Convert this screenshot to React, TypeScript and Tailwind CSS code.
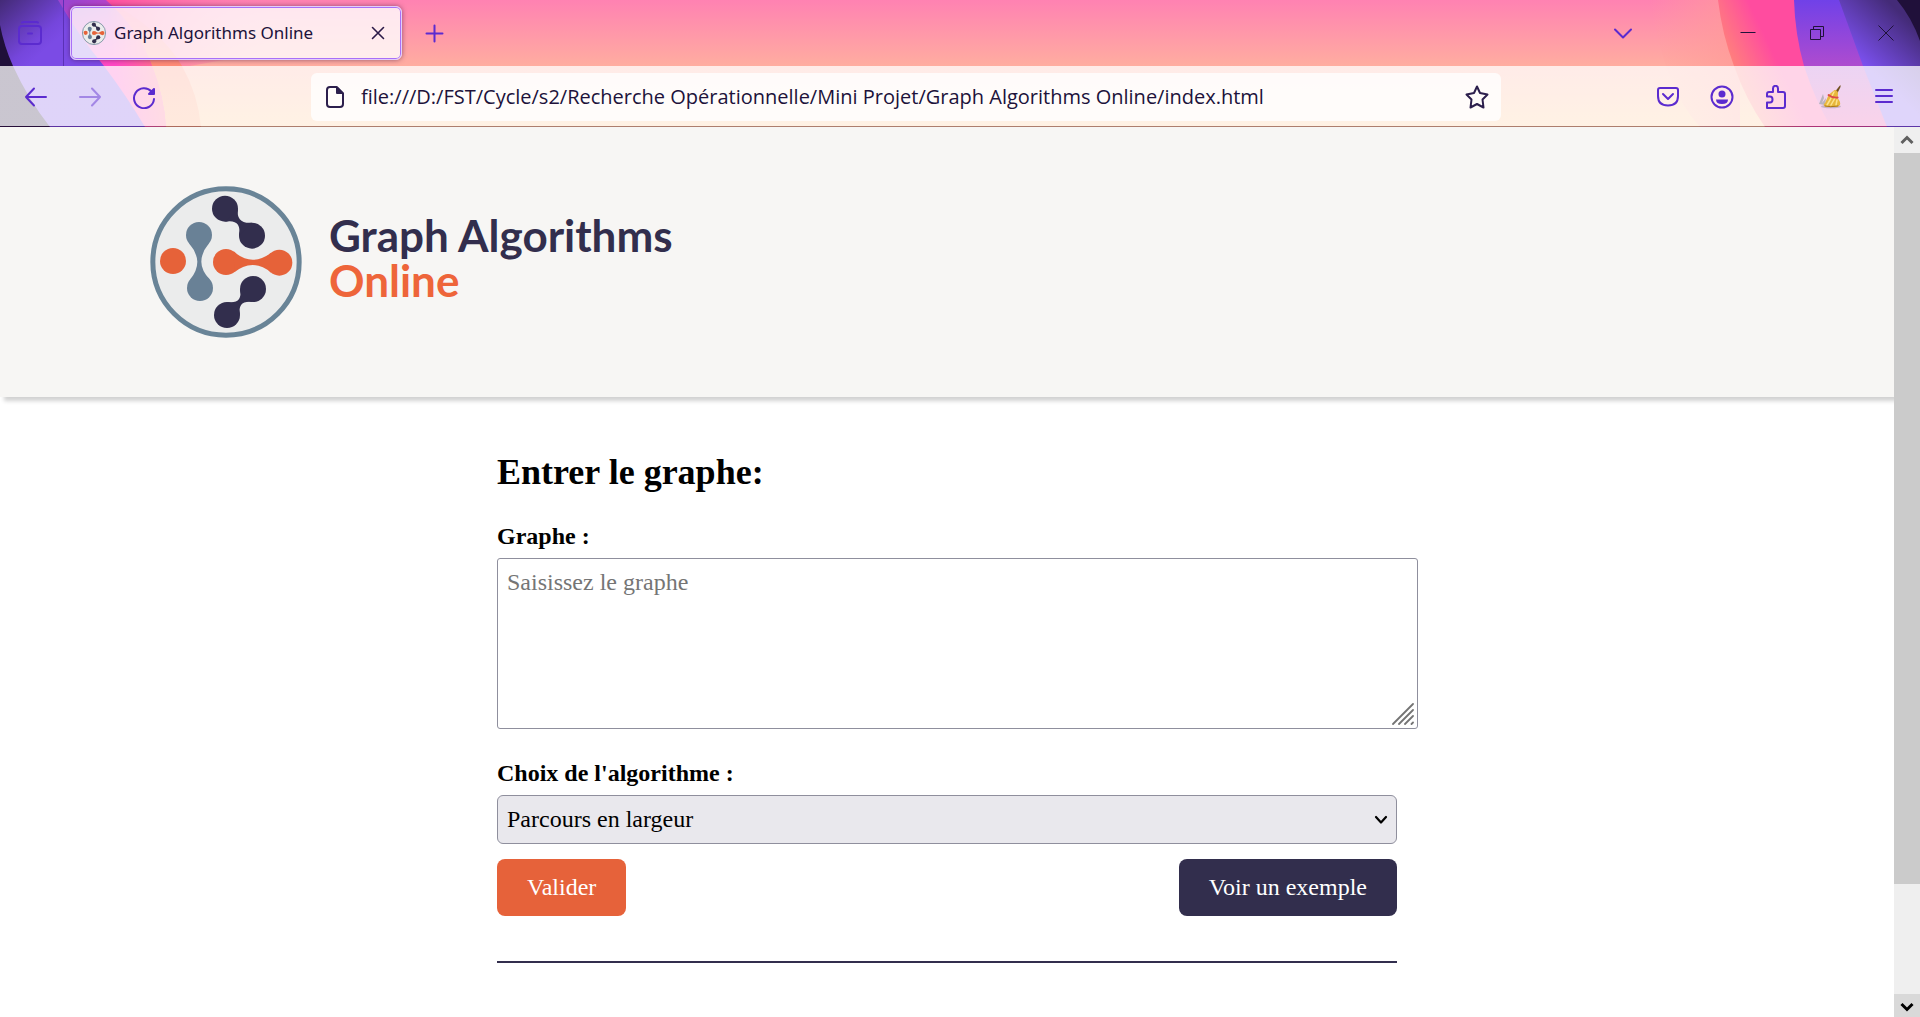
import type { ReactNode } from "react";

function LogoMark({ className }: { className: string }) {
  return (
    <svg viewBox="14 18 456 456" className={className} aria-hidden="true">
      <circle cx="242" cy="246" r="219.5" fill="#ebecec" stroke="#698497" strokeWidth="15" />
      <g fill="#698196">
        <circle cx="161" cy="165" r="39" />
        <circle cx="164" cy="324" r="39" />
        <path d="M131 190Q155 218 156 245Q156 272 134 299L194 299Q168 272 168 245Q168 218 191 190Z" />
      </g>
      <g fill="#e66239">
        <circle cx="83" cy="243" r="39" />
        <circle cx="242" cy="246" r="39" />
        <circle cx="402" cy="248" r="39" />
        <path d="M265 214Q292 239 322 239Q352 239 377 218L377 278Q352 256 322 255Q292 256 267 277Z" />
      </g>
      <g fill="#322e4d">
        <circle cx="239" cy="86" r="39" />
        <circle cx="320" cy="167" r="39" />
        <path d="M278 86Q271 132 320 128L281 167Q290 116 239 125Z" />
        <circle cx="323" cy="327" r="39" />
        <circle cx="245" cy="405" r="39" />
        <path d="M284 327Q293 373 245 366L284 405Q275 360 323 366Z" />
      </g>
    </svg>
  );
}

function ThemeArt() {
  return (
    <>
      <svg className="absolute left-0 top-0 h-[127px] w-[280px]" viewBox="0 0 280 127" aria-hidden="true">
        <defs>
          <linearGradient id="l-glow" gradientUnits="userSpaceOnUse" x1="106" y1="0" x2="270" y2="20">
            <stop offset="0" stopColor="#ff4c9f" />
            <stop offset="1" stopColor="#ff82b2" stopOpacity="0" />
          </linearGradient>
          <linearGradient id="l-orange" x1="0" y1="0" x2="0" y2="1">
            <stop offset="0" stopColor="#ff4c9f" />
            <stop offset="0.5" stopColor="#ff8a76" />
            <stop offset="1" stopColor="#ffa873" />
          </linearGradient>
          <linearGradient id="l-pink" gradientUnits="userSpaceOnUse" x1="75" y1="0" x2="100" y2="62">
            <stop offset="0" stopColor="#9d44cf" />
            <stop offset="0.5" stopColor="#d945cb" />
            <stop offset="1" stopColor="#ff48c4" />
          </linearGradient>
          <linearGradient id="l-coral" gradientUnits="userSpaceOnUse" x1="115" y1="66" x2="155" y2="60">
            <stop offset="0" stopColor="#ff6a90" stopOpacity="0" />
            <stop offset="1" stopColor="#ff6a90" />
          </linearGradient>
          <linearGradient id="l-purple" gradientUnits="userSpaceOnUse" x1="0" y1="0" x2="45" y2="50">
            <stop offset="0" stopColor="#432a76" />
            <stop offset="0.8" stopColor="#7546dc" />
            <stop offset="1" stopColor="#7b4be5" />
          </linearGradient>
        </defs>
        <path d="M100 0H280V50L190 66H120Z" fill="url(#l-glow)" />
        <path d="M0 0H106Q160 28 182 66Q198 94 201 127H0Z" fill="url(#l-orange)" />
        <path d="M0 0H106Q138 28 152 66Q164 96 166 127H0Z" fill="url(#l-pink)" />
        <path d="M0 0H106Q138 28 152 66Q164 96 166 127H0Z" fill="url(#l-coral)" />
        <path d="M0 0H58Q78 35 104 66Q128 98 145 127H0Z" fill="url(#l-purple)" />
        <path d="M0 25Q4 46 13 66Q28 99 50 127H0Z" fill="#20103a" />
      </svg>
      <svg className="absolute right-0 top-0 h-[127px] w-[270px]" viewBox="0 0 270 127" aria-hidden="true">
        <defs>
          <linearGradient id="r-fade" x1="0" y1="0" x2="1" y2="0">
            <stop offset="0" stopColor="#ff9d9a" stopOpacity="0" />
            <stop offset="1" stopColor="#ff9a98" stopOpacity="0.8" />
          </linearGradient>
          <linearGradient id="r-pink" gradientUnits="userSpaceOnUse" x1="78" y1="66" x2="120" y2="46">
            <stop offset="0" stopColor="#ff8678" />
            <stop offset="1" stopColor="#ff4c9f" />
          </linearGradient>
          <linearGradient id="r-purple" x1="0" y1="0" x2="0" y2="1">
            <stop offset="0" stopColor="#7041e8" />
            <stop offset="0.5" stopColor="#ac4bd0" />
            <stop offset="1" stopColor="#e747a6" />
          </linearGradient>
          <linearGradient id="r-violet" gradientUnits="userSpaceOnUse" x1="215" y1="66" x2="258" y2="20">
            <stop offset="0" stopColor="#7b50ee" />
            <stop offset="1" stopColor="#442b78" />
          </linearGradient>
        </defs>
        <path d="M0 0H90V127H50Q15 90 0 0Z" fill="url(#r-fade)" />
        <path d="M68 0Q72 34 84 66Q96 100 115 127H270V0Z" fill="url(#r-pink)" />
        <path d="M144 0Q145 34 154 66Q165 100 181 127H270V0Z" fill="url(#r-purple)" />
        <path d="M189 0L213 66L237 127H270V0Z" fill="url(#r-violet)" />
        <path d="M247 0Q262 18 270 41V0Z" fill="#20103a" />
      </svg>
    </>
  );
}

type IconProps = { label: string; width?: string; children: ReactNode };

function ChromeButton({ label, width = "w-[54px]", children }: IconProps) {
  return (
    <button type="button" aria-label={label} className={`flex h-full shrink-0 items-center justify-center text-[#5b2bcf] ${width}`}>
      <svg
        viewBox="0 0 24 24"
        className="h-6 w-6"
        fill="none"
        stroke="currentColor"
        strokeWidth="2"
        strokeLinecap="round"
        strokeLinejoin="round"
        aria-hidden="true"
      >
        {children}
      </svg>
    </button>
  );
}

function TabStrip() {
  return (
    <div className="relative flex h-[66px] items-center">
      <ChromeButton label="Recent browsing" width="w-[60px]">
        <path d="M4 1.5Q4.500 1 6 1H18Q19.500 1 20 1.500" />
        <rect x="1" y="5" width="22" height="18" rx="3" />
        <path d="M10 12.500H14" />
      </ChromeButton>
      <div className="ml-[3px] h-full w-px bg-[#5a31b5]" />
      <div className="ml-1.5 flex h-[54px] w-[332px] items-center rounded-md border border-[#e3cdfb] bg-white/80 shadow-[inset_0_0_0_1px_#a970f8,0_0_5px_rgba(60,20,60,0.55)]">
        <LogoMark className="ml-[11px] h-6 w-6" />
        <span className="ml-2 flex-1 whitespace-nowrap text-[17px] leading-6 text-[#20123a]">Graph Algorithms Online</span>
        <button type="button" aria-label="Close tab" className="mr-[11px] flex h-6 w-6 items-center justify-center text-[#2c1a48]">
          <svg viewBox="0 0 14 14" className="h-3.5 w-3.5" stroke="currentColor" strokeWidth="1.600" strokeLinecap="round" aria-hidden="true">
            <path d="M1.500 1.500L12.500 12.500M12.500 1.500L1.500 12.500" />
          </svg>
        </button>
      </div>
      <div className="ml-[5px] h-full">
        <ChromeButton label="New tab">
          <path d="M12.500 4.500V20.500M4.500 12.500H20.500" />
        </ChromeButton>
      </div>
      <div className="flex-1" />
      <ChromeButton label="List all tabs">
        <path d="M4 8.500L12 16.500L20 8.500" />
      </ChromeButton>
      <div className="ml-[63px] flex h-full text-[#20123a]">
        {[
          ["Minimize", "M4.500 11.500H19.500"],
          ["Restore", "M5.500 8.500H15.500V18.500H5.500ZM8.500 8.500V5.500H18.500V15.500H15.500"],
          ["Close", "M4.500 4.500L19.500 19.500M19.500 4.500L4.500 19.500"],
        ].map(([label, d]) => (
          <button key={label} type="button" aria-label={label} className="flex h-full w-[69px] items-center justify-center">
            <svg viewBox="0 0 24 24" className="h-6 w-6" fill="none" stroke="currentColor" aria-hidden="true">
              <path d={d} />
            </svg>
          </button>
        ))}
      </div>
    </div>
  );
}

function Toolbar() {
  return (
    <div className="relative flex h-[61px] items-center border-b border-[#320f3c]/40 bg-[linear-gradient(rgba(255,255,255,0.76),rgba(255,255,255,0.76))] bg-clip-padding px-[9px] pt-px">
      <ChromeButton label="Back">
        <path d="M22 12H2M10 3.500L2 12L10 20.500" />
      </ChromeButton>
      <button type="button" aria-label="Forward" disabled className="flex h-full w-[54px] items-center justify-center text-[#5b2bcf] opacity-45">
        <svg viewBox="0 0 24 24" className="h-6 w-6" fill="none" stroke="currentColor" strokeWidth="2" strokeLinecap="round" strokeLinejoin="round" aria-hidden="true">
          <path d="M2 12H22M14 3.500L22 12L14 20.500" />
        </svg>
      </button>
      <ChromeButton label="Reload">
        <path d="M19.500 6.500A10 10 0 1 0 22 14" />
        <path d="M22 4V9H17Z" fill="currentColor" />
      </ChromeButton>
      <div className="mx-[140px] flex h-12 min-w-0 flex-1 items-center rounded-md bg-white/80 text-[#2c1f4c]">
        <svg viewBox="0 0 18 22" className="ml-[15px] h-[22px] w-[18px] shrink-0" fill="none" stroke="currentColor" strokeWidth="2" strokeLinejoin="round" aria-hidden="true">
          <path d="M4 1H10.500L17 7.500V18Q17 21 14 21H4Q1 21 1 18V4Q1 1 4 1Z" />
          <path d="M11 1.500V7H16.500Z" fill="currentColor" />
        </svg>
        <input
          aria-label="Address"
          className="ml-[17px] min-w-0 flex-1 bg-transparent font-['Open_Sans',sans-serif] text-[20px] leading-7 text-[#20123a] outline-none"
          defaultValue="file:///D:/FST/Cycle/s2/Recherche Opérationnelle/Mini Projet/Graph Algorithms Online/index.html"
        />
        <button type="button" aria-label="Bookmark this page" className="mr-3 flex h-full items-center">
          <svg viewBox="0 0 24 24" className="h-6 w-6" fill="none" stroke="currentColor" strokeWidth="2" strokeLinejoin="round" aria-hidden="true">
            <path d="M12 1.500L15 8L22.500 9.500L17.500 14.500L18.500 22.500L12 19L5.500 22.500L6.500 14.500L1.500 9.500L9 8Z" />
          </svg>
        </button>
      </div>
      <ChromeButton label="Save to Pocket">
        <path d="M4 3H20Q22 3 22 5V11Q22 20.500 12 20.500Q2 20.500 2 11V5Q2 3 4 3Z" />
        <path d="M7 9L12 14L17 9" />
      </ChromeButton>
      <ChromeButton label="Account">
        <circle cx="12" cy="12" r="10.500" />
        <circle cx="12" cy="9" r="3.500" fill="currentColor" stroke="none" />
        <path d="M6 14.500H18Q18 19 12 19Q6 19 6 14.500Z" fill="currentColor" stroke="none" />
      </ChromeButton>
      <ChromeButton label="Extensions">
        <path d="M3 23V17.500H6Q8.500 17.500 8.500 14.500Q8.500 11.500 6 11.500H3V9Q3 7 5 7H9V3.500Q9 .8 11.500 .8Q14 .8 14 3.500V7H19Q21 7 21 9V21Q21 23 19 23Z" />
      </ChromeButton>
      <ChromeButton label="Clean history">
        <g stroke="none">
          <ellipse cx="13" cy="21.500" rx="10" ry="1.800" fill="#9b91a0" opacity="0.5" />
          <path d="M1 19L5 9L6 13L4 18L8 13L7 20Z" fill="#b9b3bd" />
          <path d="M17.500 6L21.500 1L22.500 0L22.500 2L19.500 8Z" fill="#70501f" />
          <path d="M16.500 5Q20 5 20 9L19.500 13Q23 17 22 20L19 22H8Q4 20 7 18Q9 14 10.500 10Z" fill="#e8b73c" />
          <path d="M16 7L12 15L9 20M17 13L13 20M19 15L18 20" stroke="#fbe38c" strokeWidth="1.500" fill="none" />
          <path d="M10.500 10Q14 13 19.700 12.500" stroke="#dc4a4a" strokeWidth="1.800" fill="none" />
          <path d="M7 21Q12 22.500 20 21" stroke="#a97619" strokeWidth="1" fill="none" />
        </g>
      </ChromeButton>
      <ChromeButton label="Menu">
        <path d="M4 5H20M4 11H20M4 17H20" />
      </ChromeButton>
    </div>
  );
}

function ScrollBar() {
  return (
    <div className="flex w-[26px] shrink-0 flex-col bg-[#efefef]" aria-hidden="true">
      <div className="flex h-[26px] shrink-0 items-center justify-center">
        <svg viewBox="0 0 14 12" className="h-3 w-3.5" fill="none" stroke="#606060" strokeWidth="3">
          <path d="M1.500 9L7 3.500L12.500 9" />
        </svg>
      </div>
      <div className="flex-[731] bg-[#cbcbcb]" />
      <div className="flex-[110]" />
      <div className="flex h-[23px] shrink-0 items-end justify-center bg-[#d9d9d9] pb-1">
        <svg viewBox="0 0 14 12" className="h-3 w-3.5" fill="none" stroke="#000" strokeWidth="3">
          <path d="M1.500 3L7 8.500L12.500 3" />
        </svg>
      </div>
    </div>
  );
}

function GraphForm() {
  return (
    <main className="mx-auto mt-[55px] w-full max-w-[900px] pb-10 text-2xl leading-7 text-black">
      <h1 className="text-4xl leading-10 font-bold">Entrer le graphe:</h1>
      <form className="mt-[30px]">
        <label htmlFor="graph" className="block font-bold">Graphe :</label>
        <div className="relative -mr-[21px] mt-2 h-[171px]">
          <textarea
            id="graph"
            placeholder="Saisissez le graphe"
            className="block h-full w-full resize-none rounded-[3px] border border-[#8f8f9d] bg-white px-[9px] py-[9px] placeholder:text-[#757575]"
          />
          <svg viewBox="0 0 22 22" className="pointer-events-none absolute bottom-1 right-1 h-[22px] w-[22px]" stroke="#747474" strokeWidth="1.800" strokeLinecap="round" aria-hidden="true">
            <path d="M1 21L21 1M7 21L21 7M13 21L21 13M19.500 21L21 19.500" />
          </svg>
        </div>
        <label htmlFor="algorithm" className="mt-[30px] block font-bold">Choix de l'algorithme :</label>
        <div className="relative mt-2">
          <select id="algorithm" className="block h-[49px] w-full appearance-none rounded-md border border-[#8f8f9d] bg-[#e9e8ed] px-[9px] pb-0.5">
            <option>Parcours en largeur</option>
          </select>
          <svg viewBox="0 0 14 10" className="pointer-events-none absolute right-[9px] top-5 h-2.5 w-3.5" fill="none" stroke="#000" strokeWidth="2.200" strokeLinecap="round" strokeLinejoin="round" aria-hidden="true">
            <path d="M2 2L7 7.500L12 2" />
          </svg>
        </div>
        <div className="mt-[15px] flex justify-between text-white">
          <button type="button" className="h-[57px] rounded-lg bg-[#e6623a] px-[30px] pb-0.5">Valider</button>
          <button type="button" className="h-[57px] rounded-lg bg-[#322e4d] px-[30px] pb-0.5">Voir un exemple</button>
        </div>
      </form>
      <hr className="mt-[45px] border-t-2 border-[#322e4d]" />
    </main>
  );
}

export default function App() {
  return (
    <div className="flex h-screen flex-col overflow-hidden bg-white">
      <header className="relative shrink-0 bg-[linear-gradient(#ff82b2,#ffada0_66px,#ffc98f)] font-['Noto_Sans',sans-serif]">
        <ThemeArt />
        <TabStrip />
        <Toolbar />
      </header>
      <div className="flex min-h-0 flex-1">
        <div className="min-w-0 flex-1 overflow-hidden font-['Liberation_Serif',serif]">
          <div className="flex items-center gap-[27px] bg-[#f7f6f4] py-[59px] pl-[150px] shadow-[4px_4px_4px_rgba(0,0,0,0.18)]">
            <LogoMark className="h-[152px] w-[152px]" />
            <div className="pb-2 font-['Lato',sans-serif] text-[44px] leading-[45px] font-bold text-[#322e4d]">
              Graph Algorithms
              <br />
              <span className="text-[#ee653a]">Online</span>
            </div>
          </div>
          <GraphForm />
        </div>
        <ScrollBar />
      </div>
    </div>
  );
}
